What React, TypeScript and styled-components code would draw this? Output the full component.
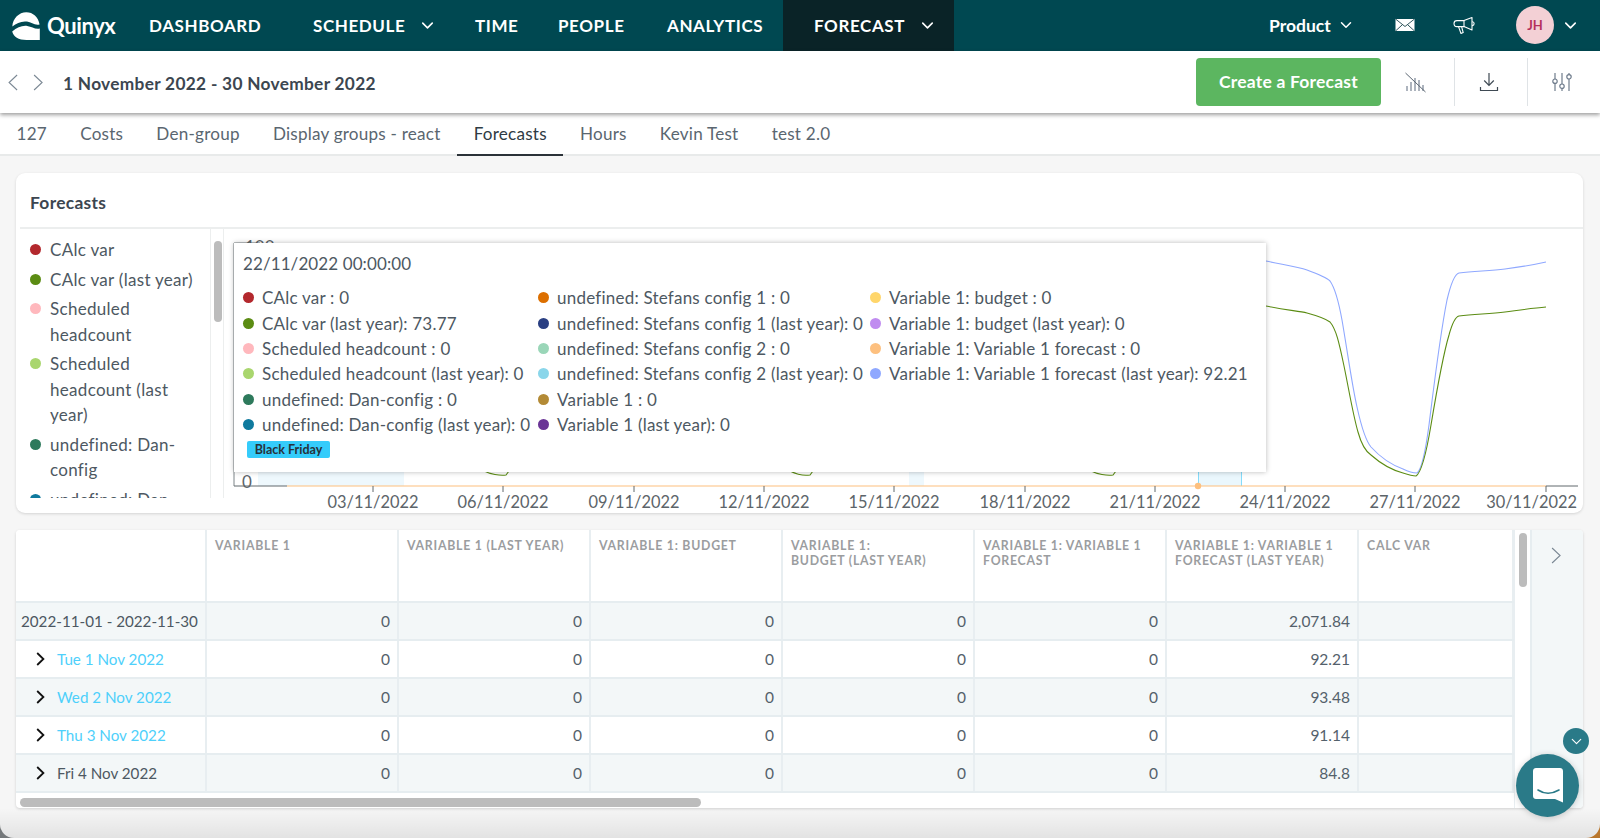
import { ReactElement } from 'react';
import styled, { createGlobalStyle } from 'styled-components';
import { ChevronDown } from 'lucide-react';

const FONT = `Lato, "Noto Sans", "Liberation Sans", sans-serif`;

const GlobalStyle = createGlobalStyle`
    html, body { margin: 0; padding: 0; height: 838px; overflow: hidden; background: #fff; }
    * { box-sizing: border-box; }
    body { font-family: ${FONT}; color: #4d5862; }
`;

const Frame = styled.div`
    position: relative;
    width: 1600px;
    height: 838px;
    overflow: hidden;
    background: linear-gradient(to right, #75797b 50%, #b9762c 50%);
`;

const Window = styled.div`
    width: 1600px;
    height: 838px;
    display: flex;
    flex-direction: column;
    background: #f6f6f6;
    border-radius: 0 0 14px 14px;
    overflow: hidden;
`;

const TopNav = styled.header`
    height: 51px;
    flex: none;
    display: flex;
    align-items: center;
    background: #004851;
    color: #fff;
`;

const LogoBox = styled.div`
    width: 149px;
    display: flex;
    align-items: center;
    gap: 7px;
    padding-left: 12px;
`;

const LogoText = styled.span`
    font-size: 22px;
    font-weight: 700;
    letter-spacing: -0.4px;
`;

const NavItem = styled.div<{ $w: number; $active?: boolean }>`
    width: ${p => p.$w}px;
    height: 51px;
    display: flex;
    align-items: center;
    gap: 13px;
    padding-left: ${p => (p.$active ? 31 : 0)}px;
    padding-bottom: 1px;
    font-size: 17px;
    font-weight: 700;
    letter-spacing: 0.6px;
    background: ${p => (p.$active ? '#0a2327' : 'transparent')};
`;

const NavRight = styled.div`
    margin-left: auto;
    display: flex;
    align-items: center;
    height: 51px;
    padding-bottom: 1px;
`;

const ProductLabel = styled.div`
    width: 126px;
    display: flex;
    align-items: center;
    gap: 6px;
    font-size: 17.5px;
    font-weight: 700;
`;

const NavIconSlot = styled.div<{ $w: number }>`
    width: ${p => p.$w}px;
    display: flex;
    align-items: center;
`;

const Avatar = styled.div`
    width: 38px;
    height: 38px;
    border-radius: 50%;
    display: flex;
    align-items: center;
    justify-content: center;
    background: #f3d0d5;
    color: #b5305c;
    font-size: 13px;
    font-weight: 700;
    margin-right: 7px;
`;

const UserChevron = styled(ChevronDown)`
    margin-right: 20px;
`;

const SubBar = styled.div`
    height: 62px;
    flex: none;
    position: relative;
    z-index: 2;
    display: flex;
    align-items: center;
    background: #fff;
    box-shadow: 0 2px 4px rgba(0, 0, 0, 0.38);
`;

const DateArrows = styled.div`
    display: flex;
    gap: 15px;
    padding-left: 8px;
    width: 63px;
`;

const DateRange = styled.div`
    padding-top: 2px;
    font-size: 17.3px;
    font-weight: 700;
    color: #3c4650;
    letter-spacing: 0.3px;
`;

const SubBarActions = styled.div`
    margin-left: auto;
    display: flex;
    align-items: center;
`;

const CreateButton = styled.button`
    width: 185px;
    height: 48px;
    padding-bottom: 3px;
    border: 0;
    border-radius: 4px;
    background: #5cb660;
    color: #fff;
    font-family: ${FONT};
    font-size: 17.5px;
    font-weight: 700;
    letter-spacing: 0.2px;
`;

const ActionSlot = styled.div<{ $divider?: boolean }>`
    width: 73px;
    height: 48px;
    padding-right: 5px;
    display: flex;
    align-items: center;
    justify-content: center;
    border-left: 1px solid ${p => (p.$divider ? '#dfe3e6' : 'transparent')};
`;

const TabsBar = styled.nav`
    height: 43px;
    flex: none;
    display: flex;
    background: #fff;
    border-bottom: 2px solid #e8eaea;
`;

const Tab = styled.div<{ $active?: boolean }>`
    height: 43px;
    padding: 0 16.6px;
    display: flex;
    align-items: center;
    font-size: 17.1px;
    letter-spacing: 0.22px;
    color: ${p => (p.$active ? '#2f3b44' : '#5a6670')};
    border-bottom: 2px solid ${p => (p.$active ? '#2b3238' : 'transparent')};
`;

const Content = styled.main`
    flex: 1;
    display: flex;
    flex-direction: column;
    gap: 17px;
    padding: 17px 17px 0 16px;
`;

const ChartCard = styled.section`
    height: 340px;
    flex: none;
    background: #fff;
    border-radius: 9px;
    box-shadow: 0 1px 3px rgba(0, 0, 0, 0.14);
    overflow: hidden;
`;

const CardTitle = styled.h2`
    height: 56px;
    margin: 0 0 0 4px;
    padding: 5px 0 0 10px;
    display: flex;
    align-items: center;
    font-size: 17.4px;
    letter-spacing: 0.3px;
    font-weight: 700;
    color: #3c4650;
    border-bottom: 2px solid #eceeee;
`;

const ChartBody = styled.div`
    display: flex;
    height: 269px;
`;

const LegendList = styled.ul`
    width: 194px;
    height: 269px;
    flex: none;
    margin: 0;
    padding: 8px 0 0 14px;
    list-style: none;
    overflow: hidden;
`;

const LegendItem = styled.li`
    display: flex;
    gap: 9px;
    padding-bottom: 4px;
    font-size: 17px;
    letter-spacing: 0.3px;
    line-height: 25.5px;
    color: #4d5862;
`;

const LegendLabel = styled.span`
    width: 150px;
`;

const Dot = styled.span<{ $color: string }>`
    flex: none;
    width: 11px;
    height: 11px;
    margin-top: 7px;
    border-radius: 50%;
    background: ${p => p.$color};
`;

const ScrollGutter = styled.div`
    width: 14px;
    flex: none;
    padding: 12px 2px 0 3px;
    border-left: 1px solid #eceeee;
    border-right: 1px solid #eceeee;
`;

const ScrollThumb = styled.div<{ $size: number }>`
    width: 8px;
    height: ${p => p.$size}px;
    border-radius: 4px;
    background: #bcbcbc;
`;

const ChartArea = styled.div`
    position: relative;
    flex: 1;
`;

const ChartSvg = styled.svg`
    display: block;
    font-family: ${FONT};
`;

const TooltipBox = styled.div`
    position: absolute;
    left: 10px;
    top: 14px;
    width: 1032px;
    height: 229px;
    padding: 9px 9px;
    background: #fff;
    box-shadow: 0 0 5px rgba(0, 0, 0, 0.28);
`;

const TooltipDate = styled.div`
    font-size: 17px;
    letter-spacing: 0.1px;
    line-height: 24px;
    margin-bottom: 9px;
    color: #4d5862;
`;

const TooltipColumns = styled.div`
    display: grid;
    grid-template-columns: 295px 332px 1fr;
    height: 153px;
`;

const TooltipRow = styled.div`
    display: flex;
    align-items: center;
    gap: 8px;
    height: 25.4px;
    font-size: 17px;
    letter-spacing: 0.22px;
    white-space: nowrap;
    color: #4d5862;
`;

const TooltipDot = styled(Dot)`
    margin-top: 0;
`;

const EventBadge = styled.span`
    display: inline-block;
    margin: 3px 0 0 4px;
    width: 83px;
    height: 17px;
    line-height: 17px;
    text-align: center;
    border-radius: 2px;
    background: #35ccfb;
    color: #27323a;
    font-size: 12.5px;
    font-weight: 700;
`;

const TickRow = styled.div`
    position: relative;
    height: 15px;
    margin-top: -4px;
    font-size: 16.4px;
    line-height: 15px;
    color: #5c6469;
`;

const TickText = styled.span<{ $x: number; $end?: boolean }>`
    position: absolute;
    left: ${p => p.$x}px;
    transform: translateX(${p => (p.$end ? '-100%' : '-50%')});
    white-space: nowrap;
`;

const TableCard = styled.section`
    height: 278px;
    flex: none;
    display: flex;
    background: #fff;
    border-radius: 4px;
    box-shadow: 0 1px 3px rgba(0, 0, 0, 0.16);
    overflow: hidden;
`;

const TableScroll = styled.div`
    width: 1498px;
    flex: none;
    display: flex;
    flex-direction: column;
`;

const GridRow = styled.div<{ $shade?: boolean; $height: number }>`
    display: grid;
    grid-template-columns: 191px repeat(6, 192px) 155px;
    height: ${p => p.$height}px;
    flex: none;
    background: ${p => (p.$shade ? '#f3f7f8' : '#fff')};
    border-bottom: 2px solid #e6edf0;
`;

const HeadCell = styled.div`
    padding: 8px 6px 0 8px;
    font-size: 12.3px;
    line-height: 15px;
    font-weight: 700;
    letter-spacing: 0.75px;
    color: #9b9d9f;
    white-space: pre-line;
    border-right: 2px solid #e8eef1;
`;

const NumCell = styled.div`
    display: flex;
    align-items: center;
    justify-content: flex-end;
    padding-right: 7px;
    font-size: 15.5px;
    color: #54616b;
    border-right: 2px solid #e8eef1;
`;

const DateCell = styled.div<{ $link?: boolean; $total?: boolean }>`
    display: flex;
    align-items: center;
    gap: 12px;
    padding-left: ${p => (p.$total ? 5 : 20)}px;
    font-size: 15.2px;
    white-space: nowrap;
    color: ${p => (p.$link ? '#4ed0fb' : '#4d5862')};
    border-right: 2px solid #e8eef1;
`;

const HScroll = styled.div`
    flex: 1;
    padding: 5px 0 0 4px;
`;

const HThumb = styled.div`
    width: 681px;
    height: 9px;
    border-radius: 5px;
    background: #bcbcbc;
`;

const VScroll = styled.div`
    width: 16px;
    flex: none;
    padding: 3px 0 0 4px;
    border-left: 1px solid #e8eef1;
`;

const SidePanel = styled.div`
    flex: 1;
    padding: 17px 0 0 19px;
    background: #f3f7f8;
    border-left: 2px solid #e6edf0;
`;

const ChatWidget = styled.div`
    position: absolute;
    left: 1516px;
    top: 754px;
    width: 63px;
    height: 63px;
    display: flex;
    align-items: center;
    justify-content: center;
    border-radius: 50%;
    background: #2a7a88;
    box-shadow: 0 1px 6px rgba(0, 0, 0, 0.2);
`;

const ChatCollapse = styled.div`
    position: absolute;
    left: 1563px;
    top: 728px;
    width: 26px;
    height: 26px;
    display: flex;
    align-items: center;
    justify-content: center;
    border-radius: 50%;
    background: #2a7a88;
`;

const BottomShade = styled.div`
    position: absolute;
    left: 0;
    right: 0;
    bottom: 0;
    height: 30px;
    pointer-events: none;
    background: linear-gradient(to bottom, rgba(0, 0, 0, 0), rgba(0, 0, 0, 0.08));
    border-radius: 0 0 14px 14px;
`;

function Logo(): ReactElement {
    return (
        <svg width="28" height="28" viewBox="12 11 28 28" fill="#fff">
            <path d="M12.3 25.5C12.8 17.5 19 11.3 26.3 11.3C33 11.3 38.2 16 39.6 23.4C34.5 24.6 31.6 21.2 27 20.6C21 19.9 16.8 22.3 12.3 25.5Z" />
            <path d="M12.2 30.4C17 26.6 22 24.2 27.2 24.9C32 25.5 35 28.6 39.8 27.5L39.8 38.9L26.5 38.9C18.5 38.9 13.4 35.6 12.2 30.4Z" />
        </svg>
    );
}

function MailIcon(): ReactElement {
    return (
        <svg width="20" height="14" viewBox="0 0 20 14">
            <rect x="0.5" y="1" width="19" height="12" fill="#fff" />
            <path d="M0.5 1L10 8.5L19.5 1M0.5 13L7.5 6.6M19.5 13L12.5 6.6" fill="none" stroke="#33585e" strokeWidth="1" />
        </svg>
    );
}

function MegaphoneIcon(): ReactElement {
    return (
        <svg width="23" height="19" viewBox="0 0 23 19" fill="none" stroke="#fff" strokeWidth="1.1" strokeLinejoin="round" strokeLinecap="round">
            <path d="M19 1.5L19 14L11 10.6L4 10.6C2 10.6 1 9 1 7.5C1 6 2 4.6 4 4.6L11 4.6Z" />
            <path d="M11 4.6L11 10.6M5.5 10.6L8 17.5L10.2 16.6L8.6 10.6" />
            <path d="M19.5 5.8C21.5 6 21.8 9 19.5 9.6" />
        </svg>
    );
}

function ThinChevron({ dir, color, h }: { dir: 'left' | 'right'; color: string; h: number }): ReactElement {
    return (
        <svg width={h * 0.6} height={h} viewBox="0 0 10 17" fill="none" stroke={color} strokeWidth="1.1">
            <path d={dir === 'left' ? 'M9 1L1 8.5L9 16' : 'M1 1L9 8.5L1 16'} />
        </svg>
    );
}

function ChartOffIcon(): ReactElement {
    return (
        <svg width="21" height="21" viewBox="0 0 21 21" fill="none" stroke="#8b95a3" strokeWidth="1.4">
            <path d="M2 19V14M6 19V10M10 19V6M14 19V8M18 19V13" />
            <path d="M0.5 1L20.5 20" stroke="#5b6672" strokeWidth="1" />
        </svg>
    );
}

function DownloadIcon(): ReactElement {
    return (
        <svg width="20" height="20" viewBox="0 0 20 20" fill="none" stroke="#3f4a54" strokeWidth="1.2">
            <path d="M10 1V13M5.2 8.5L10 13.3L14.8 8.5" />
            <path d="M1.5 15V18.5H18.5V15" />
        </svg>
    );
}

function SlidersIcon(): ReactElement {
    return (
        <svg width="20" height="20" viewBox="0 0 20 20" fill="none" stroke="#6f7c8c" strokeWidth="1.2">
            <path d="M3 1V7M3 11.5V19M10 1V12M10 16.5V19M17 1V2.5M17 7V19" />
            <circle cx="3" cy="9.2" r="2.2" />
            <circle cx="10" cy="14.2" r="2.2" />
            <circle cx="17" cy="4.8" r="2.2" />
        </svg>
    );
}

function RowChevron(): ReactElement {
    return (
        <svg width="9" height="14" viewBox="0 0 9 14" fill="none" stroke="#111" strokeWidth="1.8">
            <path d="M1.2 1L7.4 7L1.2 13" />
        </svg>
    );
}

function ChatIcon(): ReactElement {
    return (
        <svg width="30" height="35" viewBox="0 0 30 35">
            <path d="M3 0H27C28.7 0 30 1.3 30 3V34.5L22 31H3C1.3 31 0 29.7 0 28V3C0 1.3 1.3 0 3 0Z" fill="#fff" />
            <path d="M5 22C11 26 19 26 26 22" fill="none" stroke="#2a7a88" strokeWidth="1.6" strokeLinecap="round" />
        </svg>
    );
}

const LEGEND = [
    { label: 'CAlc var', color: '#b3282d' },
    { label: 'CAlc var (last year)', color: '#5b8c13' },
    { label: 'Scheduled headcount', color: '#ffb8bd' },
    { label: 'Scheduled headcount (last year)', color: '#a9d66e' },
    { label: 'undefined: Dan-config', color: '#2e7a5c' },
    { label: 'undefined: Dan-config (last year)', color: '#0f7a9e' },
];

const TOOLTIP_COLUMNS = [
    [
        { label: 'CAlc var : 0', color: '#b3282d' },
        { label: 'CAlc var (last year): 73.77', color: '#5b8c13' },
        { label: 'Scheduled headcount : 0', color: '#ffb8bd' },
        { label: 'Scheduled headcount (last year): 0', color: '#a9d66e' },
        { label: 'undefined: Dan-config : 0', color: '#2e7a5c' },
        { label: 'undefined: Dan-config (last year): 0', color: '#0f7a9e' },
    ],
    [
        { label: 'undefined: Stefans config 1 : 0', color: '#dc6f00' },
        { label: 'undefined: Stefans config 1 (last year): 0', color: '#2a3f82' },
        { label: 'undefined: Stefans config 2 : 0', color: '#9ad6b8' },
        { label: 'undefined: Stefans config 2 (last year): 0', color: '#8ad6ea' },
        { label: 'Variable 1 : 0', color: '#b38a35' },
        { label: 'Variable 1 (last year): 0', color: '#6a3596' },
    ],
    [
        { label: 'Variable 1: budget : 0', color: '#ffd66b' },
        { label: 'Variable 1: budget (last year): 0', color: '#c08cf0' },
        { label: 'Variable 1: Variable 1 forecast : 0', color: '#fdc07f' },
        { label: 'Variable 1: Variable 1 forecast (last year): 92.21', color: '#8fa8ff' },
    ],
];

const TICKS = ['03/11/2022', '06/11/2022', '09/11/2022', '12/11/2022', '15/11/2022', '18/11/2022', '21/11/2022', '24/11/2022', '27/11/2022'];
const TICK_XS = [373, 503, 634, 764, 894, 1025, 1155, 1285, 1415];

const BLUE_LINE = 'M1266 261C1285 265 1298 267 1307 270C1318 274 1326 277 1330 281C1335 288 1338 298 1342 320C1348 355 1352 385 1357 407C1361 425 1365 440 1371 447C1380 457 1392 465 1403 469C1409 472 1413 473 1417 473C1421 470 1425 455 1429 425C1434 385 1440 335 1447 300C1451 283 1455 274 1459 273C1475 271 1490 271 1505 269C1520 267 1533 265 1546 262';
const GREEN_LINE = 'M1266 306C1285 310 1298 311 1307 313C1318 316 1326 319 1330 322C1336 329 1339 342 1344 366C1349 390 1353 415 1358 432C1361 443 1365 451 1371 455C1380 463 1392 470 1403 473C1409 475 1413 476 1416 476C1421 473 1426 455 1431 425C1436 395 1443 355 1449 335C1452 324 1455 317 1459 316C1475 314 1490 314 1505 312C1520 310 1533 308 1546 307';

const COLUMNS = [
    'VARIABLE 1',
    'VARIABLE 1 (LAST YEAR)',
    'VARIABLE 1: BUDGET',
    'VARIABLE 1:\nBUDGET (LAST YEAR)',
    'VARIABLE 1: VARIABLE 1\nFORECAST',
    'VARIABLE 1: VARIABLE 1\nFORECAST (LAST YEAR)',
    'CALC VAR',
];

const ROWS = [
    { date: '2022-11-01 - 2022-11-30', forecast: '2,071.84', total: true },
    { date: 'Tue 1 Nov 2022', forecast: '92.21', link: true },
    { date: 'Wed 2 Nov 2022', forecast: '93.48', link: true },
    { date: 'Thu 3 Nov 2022', forecast: '91.14', link: true },
    { date: 'Fri 4 Nov 2022', forecast: '84.8' },
];

function TickLabels(): ReactElement {
    return (
        <TickRow>
            {TICKS.map((t, i) => <TickText key={t} $x={TICK_XS[i] - 16}>{t}</TickText>)}
            <TickText $x={1561} $end>30/11/2022</TickText>
        </TickRow>
    );
}

export default function App(): ReactElement {
    return (
        <Frame>
            <GlobalStyle />
            <Window>
                <TopNav>
                    <LogoBox>
                        <Logo />
                        <LogoText>Quinyx</LogoText>
                    </LogoBox>
                    <NavItem $w={164}>DASHBOARD</NavItem>
                    <NavItem $w={162}>SCHEDULE <ChevronDown size={19} strokeWidth={2} /></NavItem>
                    <NavItem $w={83}>TIME</NavItem>
                    <NavItem $w={109}>PEOPLE</NavItem>
                    <NavItem $w={116}>ANALYTICS</NavItem>
                    <NavItem $w={171} $active>FORECAST <ChevronDown size={19} strokeWidth={2} /></NavItem>
                    <NavRight>
                        <ProductLabel>Product <ChevronDown size={18} strokeWidth={2} /></ProductLabel>
                        <NavIconSlot $w={58}><MailIcon /></NavIconSlot>
                        <NavIconSlot $w={63}><MegaphoneIcon /></NavIconSlot>
                        <Avatar>JH</Avatar>
                        <UserChevron size={19} strokeWidth={2} />
                    </NavRight>
                </TopNav>

                <SubBar>
                    <DateArrows>
                        <ThinChevron dir="left" color="#7b8894" h={17} />
                        <ThinChevron dir="right" color="#7b8894" h={17} />
                    </DateArrows>
                    <DateRange>1 November 2022 - 30 November 2022</DateRange>
                    <SubBarActions>
                        <CreateButton>Create a Forecast</CreateButton>
                        <ActionSlot><ChartOffIcon /></ActionSlot>
                        <ActionSlot $divider><DownloadIcon /></ActionSlot>
                        <ActionSlot $divider><SlidersIcon /></ActionSlot>
                    </SubBarActions>
                </SubBar>

                <TabsBar>
                    {['127', 'Costs', 'Den-group', 'Display groups - react', 'Forecasts', 'Hours', 'Kevin Test', 'test 2.0'].map(t => (
                        <Tab key={t} $active={t === 'Forecasts'}>{t}</Tab>
                    ))}
                </TabsBar>

                <Content>
                    <ChartCard>
                        <CardTitle>Forecasts</CardTitle>
                        <ChartBody>
                            <LegendList>
                                {LEGEND.map(item => (
                                    <LegendItem key={item.label}>
                                        <Dot $color={item.color} />
                                        <LegendLabel>{item.label}</LegendLabel>
                                    </LegendItem>
                                ))}
                            </LegendList>
                            <ScrollGutter><ScrollThumb $size={81} /></ScrollGutter>
                            <ChartArea>
                                <ChartSvg width="1358" height="269" viewBox="224 229 1358 269">
                                    <path d="M234 486V243H260" fill="none" stroke="#7d8488" strokeWidth="1" />
                                    <text x="245" y="253" fontSize="17" fill="#5c6469">100</text>
                                    <text x="242" y="488" fontSize="17" fill="#5c6469">0</text>
                                    <rect x="258" y="470" width="146" height="16" fill="#eef8fd" />
                                    <rect x="909" y="470" width="15" height="16" fill="#eef8fd" />
                                    <rect x="1198" y="470" width="44" height="16" fill="#eaf7fd" />
                                    <path d="M1198.5 470V486M1241.5 470V486" stroke="#84dcfb" strokeWidth="1" />
                                    <path d={BLUE_LINE} fill="none" stroke="#8fa8ff" strokeWidth="1.1" />
                                    <path d={GREEN_LINE} fill="none" stroke="#5b8c13" strokeWidth="1.1" />
                                    <path d="M484 471C490 474 500 476 506 475L509 471M790 471C796 474 804 476 810 475L813 471M1091 471C1097 474 1107 476 1113 475L1116 471" fill="none" stroke="#5b8c13" strokeWidth="1.1" />
                                    <path d="M234 486H287M1546 486H1578" stroke="#60686d" strokeWidth="1" />
                                    <path d="M287 486H1546" stroke="#fdc07f" strokeWidth="1.2" />
                                    <circle cx="1198" cy="486" r="3.2" fill="#fdc07f" />
                                    {TICK_XS.map(x => <path key={x} d={`M${x} 486V492`} stroke="#60686d" strokeWidth="1" />)}
                                    <path d="M1546 486V492" stroke="#60686d" strokeWidth="1" />
                                </ChartSvg>
                                <TooltipBox>
                                    <TooltipDate>22/11/2022 00:00:00</TooltipDate>
                                    <TooltipColumns>
                                        {TOOLTIP_COLUMNS.map((col, i) => (
                                            <div key={i}>
                                                {col.map(row => (
                                                    <TooltipRow key={row.label}>
                                                        <TooltipDot $color={row.color} />
                                                        {row.label}
                                                    </TooltipRow>
                                                ))}
                                            </div>
                                        ))}
                                    </TooltipColumns>
                                    <EventBadge>Black Friday</EventBadge>
                                </TooltipBox>
                            </ChartArea>
                        </ChartBody>
                        <TickLabels />
                    </ChartCard>

                    <TableCard>
                        <TableScroll>
                            <GridRow $height={73}>
                                <HeadCell />
                                {COLUMNS.map(c => <HeadCell key={c}>{c}</HeadCell>)}
                            </GridRow>
                            {ROWS.map((row, i) => (
                                <GridRow key={row.date} $height={38} $shade={i % 2 === 0}>
                                    <DateCell $link={row.link} $total={row.total}>
                                        {!row.total && <RowChevron />}
                                        {row.date}
                                    </DateCell>
                                    <NumCell>0</NumCell>
                                    <NumCell>0</NumCell>
                                    <NumCell>0</NumCell>
                                    <NumCell>0</NumCell>
                                    <NumCell>0</NumCell>
                                    <NumCell>{row.forecast}</NumCell>
                                    <NumCell />
                                </GridRow>
                            ))}
                            <HScroll><HThumb /></HScroll>
                        </TableScroll>
                        <VScroll><ScrollThumb $size={54} /></VScroll>
                        <SidePanel><ThinChevron dir="right" color="#7b8894" h={17} /></SidePanel>
                    </TableCard>
                </Content>
            </Window>
            <BottomShade />
            <ChatCollapse><ChevronDown size={17} color="#fff" strokeWidth={1.6} /></ChatCollapse>
            <ChatWidget><ChatIcon /></ChatWidget>
        </Frame>
    );
}
